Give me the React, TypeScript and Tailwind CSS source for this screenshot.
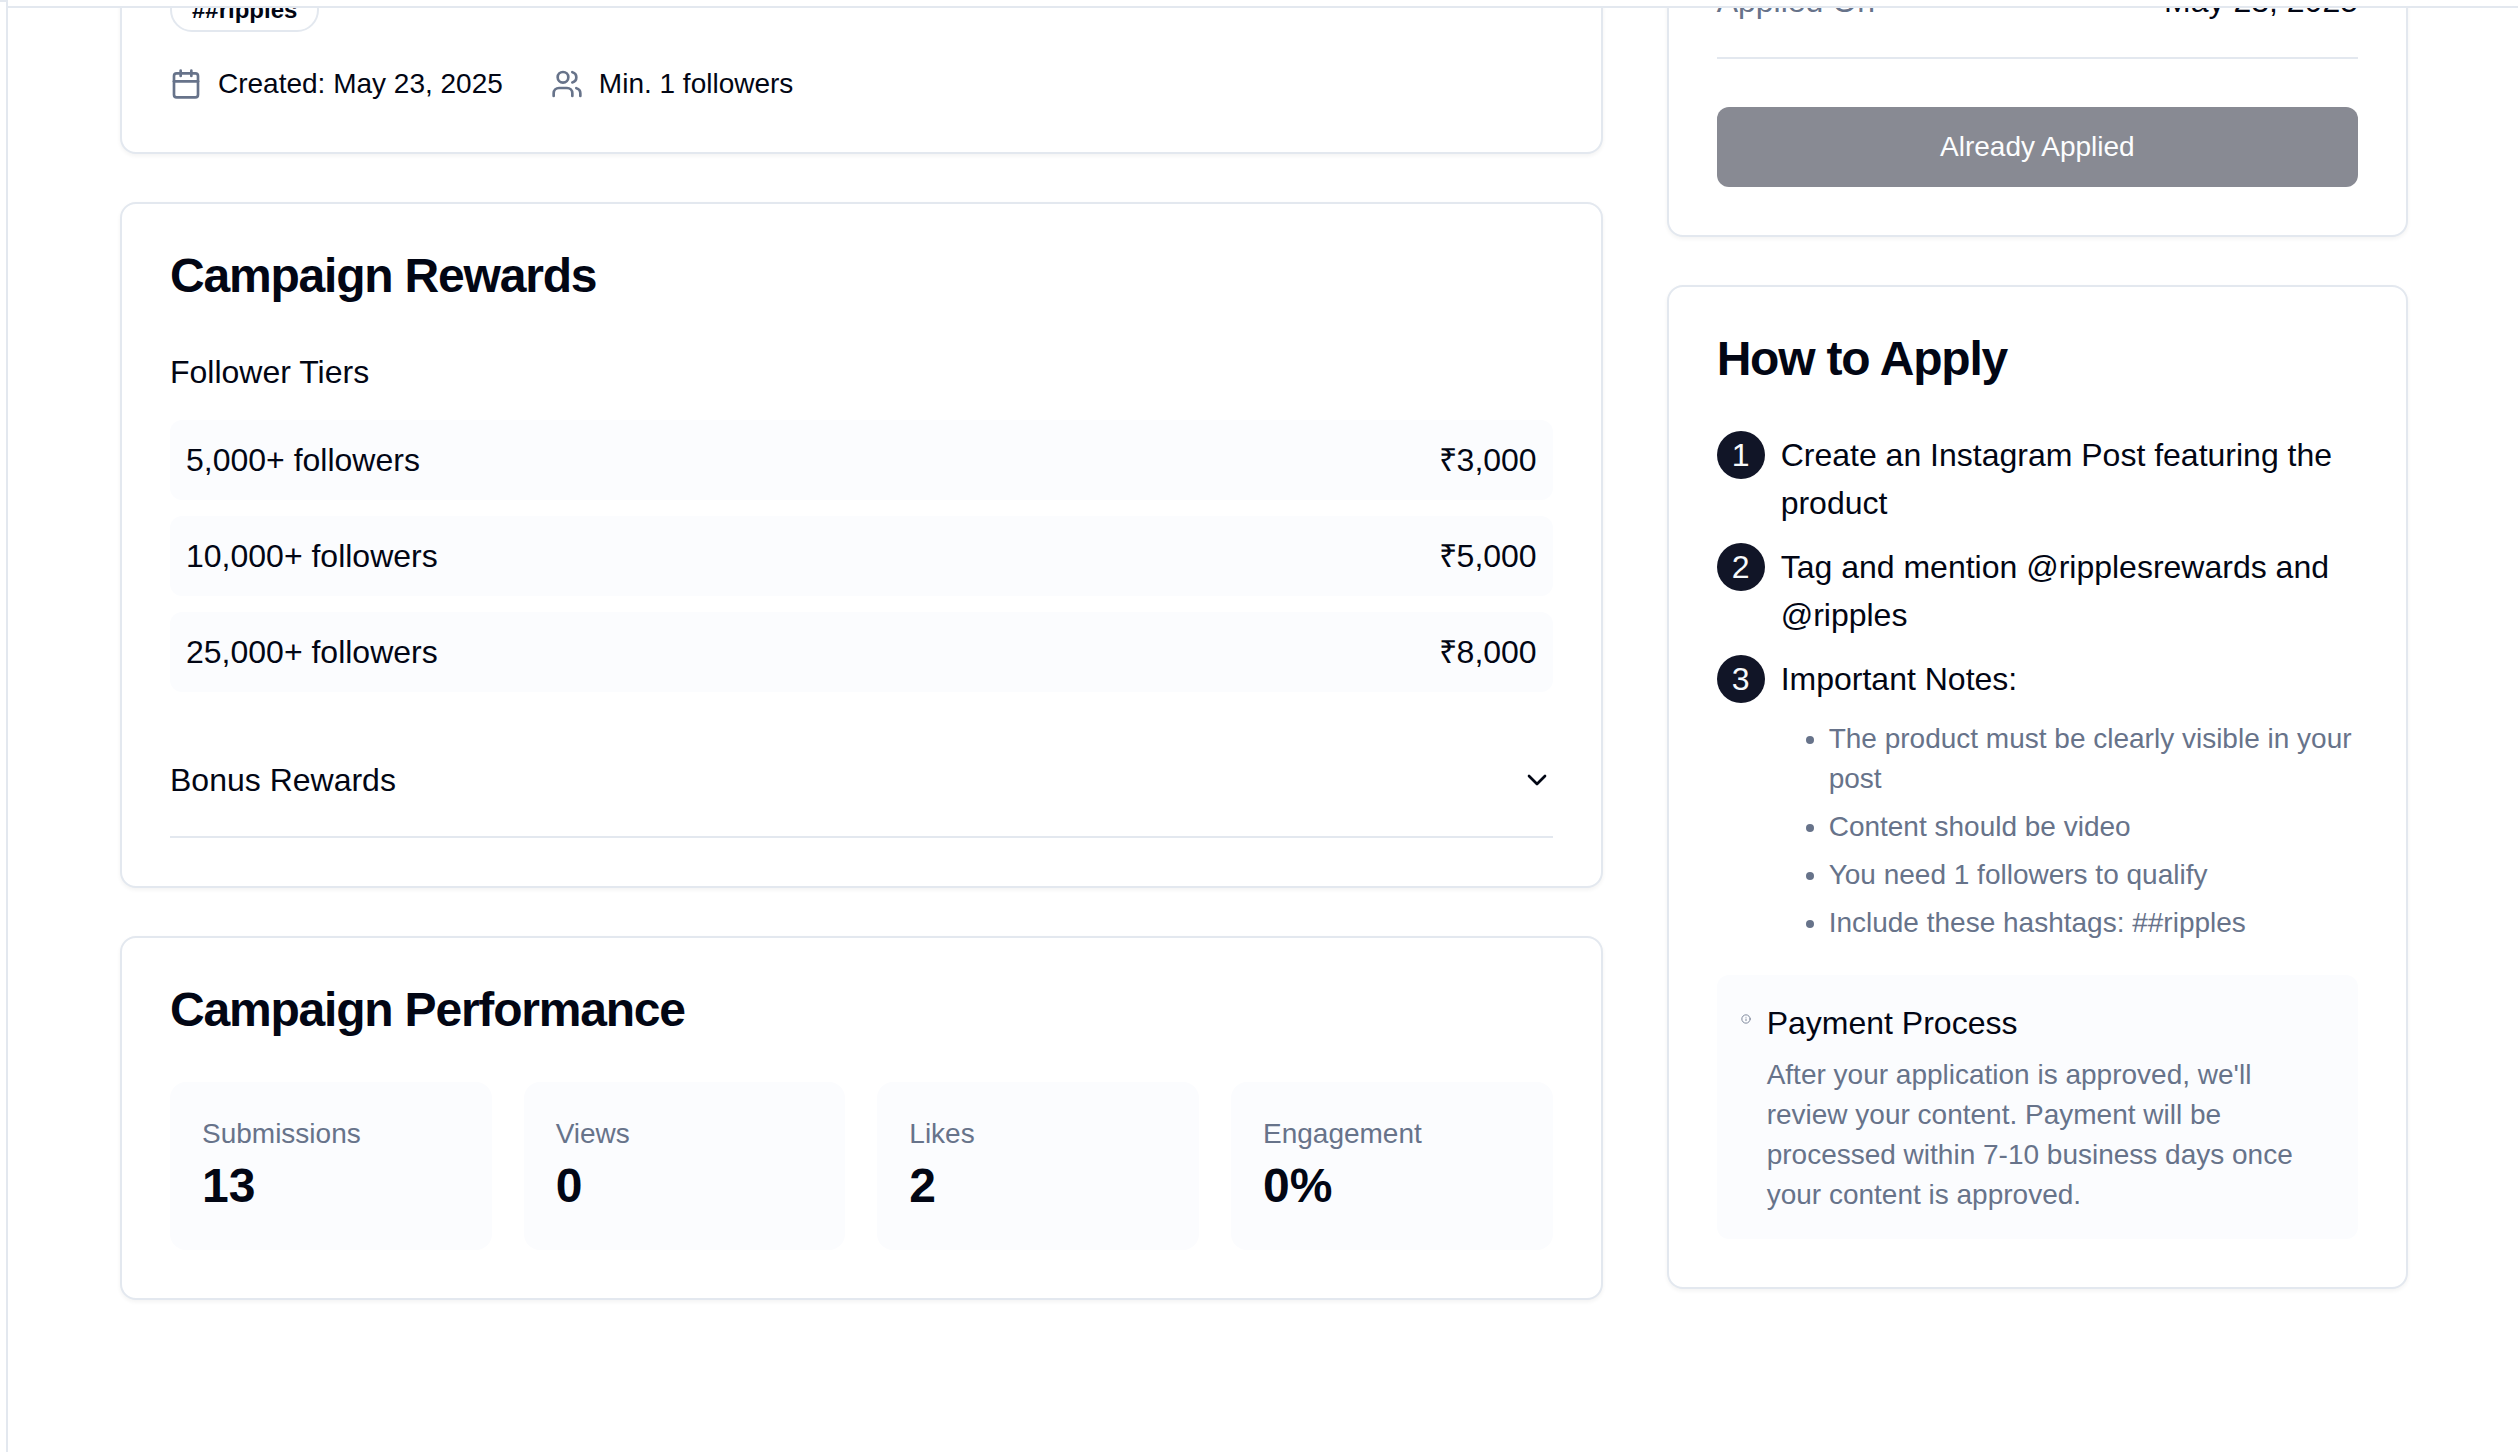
import type { ReactNode } from "react";
import { Calendar, ChevronDown, Info, Users } from "lucide-react";

const tiers = [
  { label: "5,000+ followers", reward: "₹3,000" },
  { label: "10,000+ followers", reward: "₹5,000" },
  { label: "25,000+ followers", reward: "₹8,000" },
];

const stats = [
  { label: "Submissions", value: "13" },
  { label: "Views", value: "0" },
  { label: "Likes", value: "2" },
  { label: "Engagement", value: "0%" },
];

const notes = [
  "The product must be clearly visible in your post",
  "Content should be video",
  "You need 1 followers to qualify",
  "Include these hashtags: ##ripples",
];

function Card({ className = "", children }: { className?: string; children: ReactNode }) {
  return (
    <section
      className={`rounded-[16px] border-2 border-[#e3e8ef] bg-white p-12 shadow-[0_2px_4px_rgba(0,0,0,0.05)] ${className}`}
    >
      {children}
    </section>
  );
}

function CardTitle({ children }: { children: ReactNode }) {
  return <h2 className="mb-12 text-[48px] leading-none font-bold tracking-[-0.025em]">{children}</h2>;
}

function Step({ number, children }: { number: number; children: ReactNode }) {
  return (
    <li className="flex gap-4">
      <span className="flex size-12 shrink-0 items-center justify-center rounded-full bg-[#111527] text-[#f8fafc]">
        {number}
      </span>
      <div>{children}</div>
    </li>
  );
}

export default function App() {
  return (
    <div className="flex h-[1452px] w-[2518px] overflow-hidden bg-white font-['Liberation_Sans',Arial,sans-serif] text-[32px] leading-[48px] text-[#020614]">
      {/* Sidebar edge */}
      <aside className="flex w-2 shrink-0 flex-col border-r-2 border-[#e3e8ef]">
        <div className="h-0.5 bg-[#e3e8ef]" />
      </aside>

      <div className="flex min-w-0 flex-1 flex-col">
        <header className="h-2 shrink-0 border-b-2 border-[#e3e8ef] bg-white" />

        <main className="min-h-0 flex-1 overflow-hidden pr-[110px] pl-[112px]">
          <div className="grid grid-cols-[2fr_1fr] items-start gap-16">
            <div className="flex flex-col gap-12">
              <Card className="-mt-[70px]">
                <div className="flex">
                  <span className="inline-flex rounded-full border-2 border-[#e3e8ef] px-5 py-1 text-[24px] leading-[32px] font-bold">
                    ##ripples
                  </span>
                </div>
                <div className="mt-8 flex gap-12 text-[28px] leading-[40px]">
                  <div className="flex items-center gap-4">
                    <Calendar className="size-8 text-[#67738a]" />
                    <span>Created: May 23, 2025</span>
                  </div>
                  <div className="flex items-center gap-4">
                    <Users className="size-8 text-[#67738a]" />
                    <span>Min. 1 followers</span>
                  </div>
                </div>
              </Card>

              <Card>
                <CardTitle>Campaign Rewards</CardTitle>
                <h3>Follower Tiers</h3>
                <div className="mt-6 flex flex-col gap-4">
                  {tiers.map((tier) => (
                    <div key={tier.label} className="flex justify-between rounded-[12px] bg-[#fbfcfe] p-4">
                      <span>{tier.label}</span>
                      <span>{tier.reward}</span>
                    </div>
                  ))}
                </div>
                <button className="mt-8 flex w-full items-center justify-between border-b-2 border-[#e3e8ef] py-8">
                  <span>Bonus Rewards</span>
                  <ChevronDown className="size-8" />
                </button>
              </Card>

              <Card>
                <CardTitle>Campaign Performance</CardTitle>
                <div className="grid grid-cols-4 gap-8">
                  {stats.map((stat) => (
                    <div key={stat.label} className="rounded-[16px] bg-[#fbfcfe] p-8">
                      <p className="text-[28px] leading-[40px] text-[#67738a]">{stat.label}</p>
                      <p className="text-[48px] leading-[64px] font-bold">{stat.value}</p>
                    </div>
                  ))}
                </div>
              </Card>
            </div>

            <div className="flex flex-col gap-12">
              <Card className="-mt-[81px]">
                <div className="flex justify-between border-b-2 border-[#e3e8ef] pb-8">
                  <span className="text-[#67738a]">Applied On</span>
                  <span>May 23, 2025</span>
                </div>
                <button className="mt-12 flex h-20 w-full items-center justify-center rounded-[12px] bg-[#888a93] text-[28px] leading-[40px] text-[#fcfdfe]">
                  Already Applied
                </button>
              </Card>

              <Card>
                <CardTitle>How to Apply</CardTitle>
                <ol className="flex flex-col gap-4">
                  <Step number={1}>Create an Instagram Post featuring the product</Step>
                  <Step number={2}>Tag and mention @ripplesrewards and @ripples</Step>
                  <Step number={3}>
                    Important Notes:
                    <ul className="mt-4 flex list-disc flex-col gap-2 pl-12 text-[28px] leading-[40px] text-[#67738a]">
                      {notes.map((note) => (
                        <li key={note}>{note}</li>
                      ))}
                    </ul>
                  </Step>
                </ol>
                <div className="mt-8 flex gap-4 rounded-[12px] bg-[#fbfcfe] p-6">
                  <Info className="h-10 w-[10px] shrink-0 text-[#67738a]" />
                  <div>
                    <h4>Payment Process</h4>
                    <p className="mt-2 text-[28px] leading-[40px] text-[#67738a]">
                      After your application is approved, we'll review your content. Payment will be processed
                      within 7-10 business days once your content is approved.
                    </p>
                  </div>
                </div>
              </Card>
            </div>
          </div>
        </main>
      </div>
    </div>
  );
}
